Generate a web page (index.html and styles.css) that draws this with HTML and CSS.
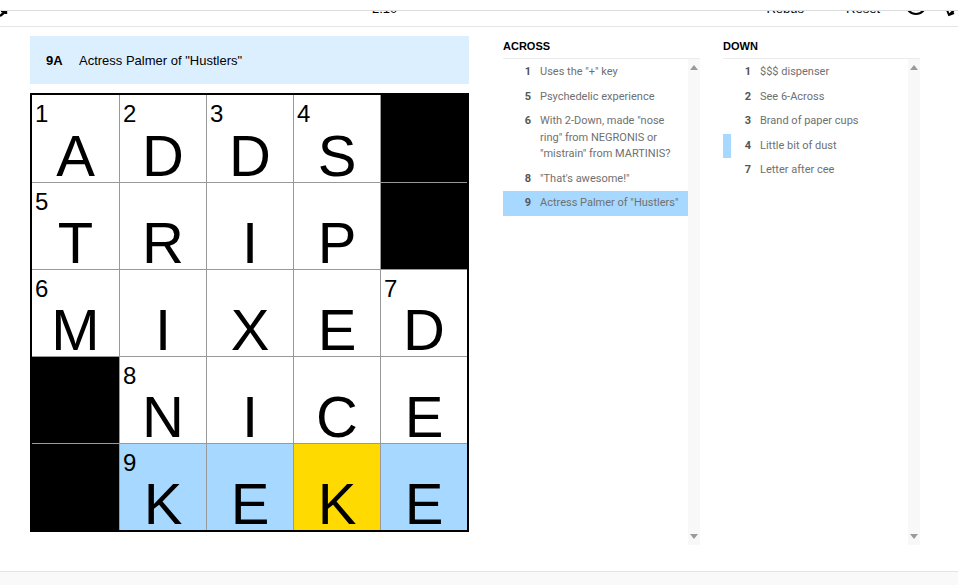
FILE: index.html
```html
<!DOCTYPE html>
<html lang="en">
  <head>
    <meta charset="UTF-8" />
    <meta name="viewport" content="width=device-width, initial-scale=1.0" />
    <title>Mini Crossword</title>
    <link rel="stylesheet" href="styles.css">
  </head>
  <body>
    <header class="toolbar">
      <div class="toolbar-row">
        <svg class="tb-back" width="8" height="16" viewBox="0 0 8 16">
          <path d="M0 15 L6 10 M1 10 L6 10 L6 13" fill="none" stroke="#000" stroke-width="2.4" />
        </svg>
        <span class="timer">2:10</span>
        <span class="spacer"></span>
        <button class="tb-btn">Rebus</button>
        <button class="tb-btn">Reset</button>
        <svg class="tb-icon" width="24" height="16" viewBox="0 0 24 16">
          <circle cx="12" cy="3" r="10" fill="none" stroke="#000" stroke-width="2" />
          <path d="M12 6 L12 10" stroke="#000" stroke-width="2" />
        </svg>
        <svg class="tb-icon pencil" width="12" height="16" viewBox="0 0 12 16">
          <path d="M1 9 L3 14 L8 12 M3 14 L12 5" fill="none" stroke="#000" stroke-width="2" />
        </svg>
      </div>
    </header>

    <main class="board">
      <section class="puzzle">
        <div class="clue-bar">
          <span class="clue-bar-num">9A</span>
          <span class="clue-bar-text">Actress Palmer of "Hustlers"</span>
        </div>

        <div class="grid">
          <div class="cell"><span class="num">1</span><span class="letter">A</span></div>
          <div class="cell"><span class="num">2</span><span class="letter">D</span></div>
          <div class="cell"><span class="num">3</span><span class="letter">D</span></div>
          <div class="cell"><span class="num">4</span><span class="letter">S</span></div>
          <div class="cell block"></div>

          <div class="cell"><span class="num">5</span><span class="letter">T</span></div>
          <div class="cell"><span class="letter">R</span></div>
          <div class="cell"><span class="letter">I</span></div>
          <div class="cell"><span class="letter">P</span></div>
          <div class="cell block"></div>

          <div class="cell"><span class="num">6</span><span class="letter">M</span></div>
          <div class="cell"><span class="letter">I</span></div>
          <div class="cell"><span class="letter">X</span></div>
          <div class="cell"><span class="letter">E</span></div>
          <div class="cell"><span class="num">7</span><span class="letter">D</span></div>

          <div class="cell block"></div>
          <div class="cell"><span class="num">8</span><span class="letter">N</span></div>
          <div class="cell"><span class="letter">I</span></div>
          <div class="cell"><span class="letter">C</span></div>
          <div class="cell"><span class="letter">E</span></div>

          <div class="cell block"></div>
          <div class="cell word"><span class="num">9</span><span class="letter">K</span></div>
          <div class="cell word"><span class="letter">E</span></div>
          <div class="cell selected"><span class="letter">K</span></div>
          <div class="cell word"><span class="letter">E</span></div>
        </div>
      </section>

      <section class="clue-lists">
        <div class="clue-list">
          <h3 class="clue-title">Across</h3>
          <div class="clue-scroll">
            <ol class="clues">
              <li class="clue"><span class="clue-num">1</span><span class="clue-text">Uses the "+" key</span></li>
              <li class="clue"><span class="clue-num">5</span><span class="clue-text">Psychedelic experience</span></li>
              <li class="clue"><span class="clue-num">6</span><span class="clue-text">With 2-Down, made "nose ring" from NEGRONIS or "mistrain" from MARTINIS?</span></li>
              <li class="clue"><span class="clue-num">8</span><span class="clue-text">"That's awesome!"</span></li>
              <li class="clue active"><span class="clue-num">9</span><span class="clue-text">Actress Palmer of "Hustlers"</span></li>
            </ol>
            <div class="scrollbar"><span class="arrow up"></span><span class="arrow down"></span></div>
          </div>
        </div>

        <div class="clue-list">
          <h3 class="clue-title">Down</h3>
          <div class="clue-scroll">
            <ol class="clues">
              <li class="clue"><span class="clue-num">1</span><span class="clue-text">$$$ dispenser</span></li>
              <li class="clue"><span class="clue-num">2</span><span class="clue-text">See 6-Across</span></li>
              <li class="clue"><span class="clue-num">3</span><span class="clue-text">Brand of paper cups</span></li>
              <li class="clue crossing"><span class="clue-num">4</span><span class="clue-text">Little bit of dust</span></li>
              <li class="clue"><span class="clue-num">7</span><span class="clue-text">Letter after cee</span></li>
            </ol>
            <div class="scrollbar"><span class="arrow up"></span><span class="arrow down"></span></div>
          </div>
        </div>
      </section>
    </main>

    <footer class="footer"></footer>
  </body>
</html>
```

FILE: styles.css
```css
* {
  margin: 0;
  padding: 0;
  box-sizing: border-box;
}

body {
  height: 100vh;
  display: flex;
  flex-direction: column;
  background: #fff;
  font-family: "Liberation Sans", Arial, sans-serif;
  color: #000;
  overflow: hidden;
}

/* Toolbar (scrolled mostly out of view under the sticky strip) */
.toolbar {
  position: relative;
  height: 27px;
  flex: none;
  border-bottom: 1px solid #e4e4e4;
  overflow: hidden;
}

.toolbar::before {
  content: "";
  position: absolute;
  top: 0;
  left: 0;
  right: 0;
  height: 10px;
  background: #fff;
  border-bottom: 1px solid #dcdcdc;
  z-index: 1;
}

.toolbar-row {
  display: flex;
  align-items: flex-start;
  padding-top: 1px;
  font-size: 13px;
  line-height: 16px;
}

.tb-back {
  flex: none;
}

.timer {
  margin-left: 364px;
}

.spacer {
  flex: 1;
}

.tb-btn {
  background: none;
  border: none;
  font: inherit;
  color: #000;
  margin-right: 42px;
}

.tb-btn + .tb-btn {
  margin-right: 24px;
}

.tb-icon {
  flex: none;
}

.pencil {
  margin-left: 18px;
}

/* Board */
.board {
  flex: 1;
  display: flex;
  gap: 34px;
  padding: 9px 0 0 30px;
}

.puzzle {
  width: 439px;
  flex: none;
}

.clue-bar {
  display: flex;
  align-items: center;
  height: 48px;
  padding: 0 16px;
  background: #dcefff;
  font-size: 13px;
}

.clue-bar-num {
  font-weight: bold;
  width: 33px;
}

.grid {
  display: grid;
  grid-template-columns: repeat(5, 87px);
  grid-auto-rows: 87px;
  margin-top: 9px;
  border: 2px solid #000;
}

.cell {
  position: relative;
  display: flex;
  justify-content: center;
  align-items: flex-end;
  border-left: 1px solid #999;
  border-top: 1px solid #999;
  background: #fff;
}

.cell:nth-child(5n + 1) {
  border-left: none;
}

.cell:nth-child(-n + 5) {
  border-top: none;
}

.cell.block {
  background: #000;
}

.cell.word {
  background: #a7d8ff;
}

.cell.selected {
  background: #ffda00;
}

.num {
  position: absolute;
  top: 7px;
  left: 3px;
  font-size: 24px;
  line-height: 24px;
}

.letter {
  font-size: 58px;
  line-height: 58px;
  margin-bottom: -3px;
}

/* Clue lists */
.clue-lists {
  display: flex;
  gap: 23px;
}

.clue-list {
  width: 197px;
  display: flex;
  flex-direction: column;
}

.clue-title {
  font-size: 11px;
  font-weight: bold;
  line-height: 16px;
  text-transform: uppercase;
  padding: 2px 0 4px;
  border-bottom: 1px solid #ececec;
}

.clue-scroll {
  display: flex;
  height: 486px;
}

.clues {
  flex: 1;
  list-style: none;
  padding-top: 1px;
}

.clue {
  display: flex;
  padding: 4px 0;
  font-family: Roboto, "Liberation Sans", sans-serif;
  font-size: 11px;
  line-height: 16.5px;
  color: #707070;
}

.clue.active {
  background: #a7d8ff;
}

.clue.crossing {
  box-shadow: inset 8px 0 #a7d8ff;
}

.clue-num {
  width: 28px;
  flex: none;
  margin-right: 9px;
  text-align: right;
  font-weight: bold;
  color: #555;
}

.clue-text {
  flex: 1;
  padding-right: 6px;
}

.scrollbar {
  width: 12px;
  flex: none;
  display: flex;
  flex-direction: column;
  justify-content: space-between;
  align-items: center;
  padding: 6px 0 6px;
  background: #f8f8f8;
}

.arrow {
  width: 0;
  height: 0;
  border-left: 4px solid transparent;
  border-right: 4px solid transparent;
}

.arrow.up {
  border-bottom: 5px solid #9a9a9a;
}

.arrow.down {
  border-top: 5px solid #9a9a9a;
}

.footer {
  height: 14px;
  flex: none;
  border-top: 1px solid #e4e4e4;
  background: #f9f9f9;
}
```
